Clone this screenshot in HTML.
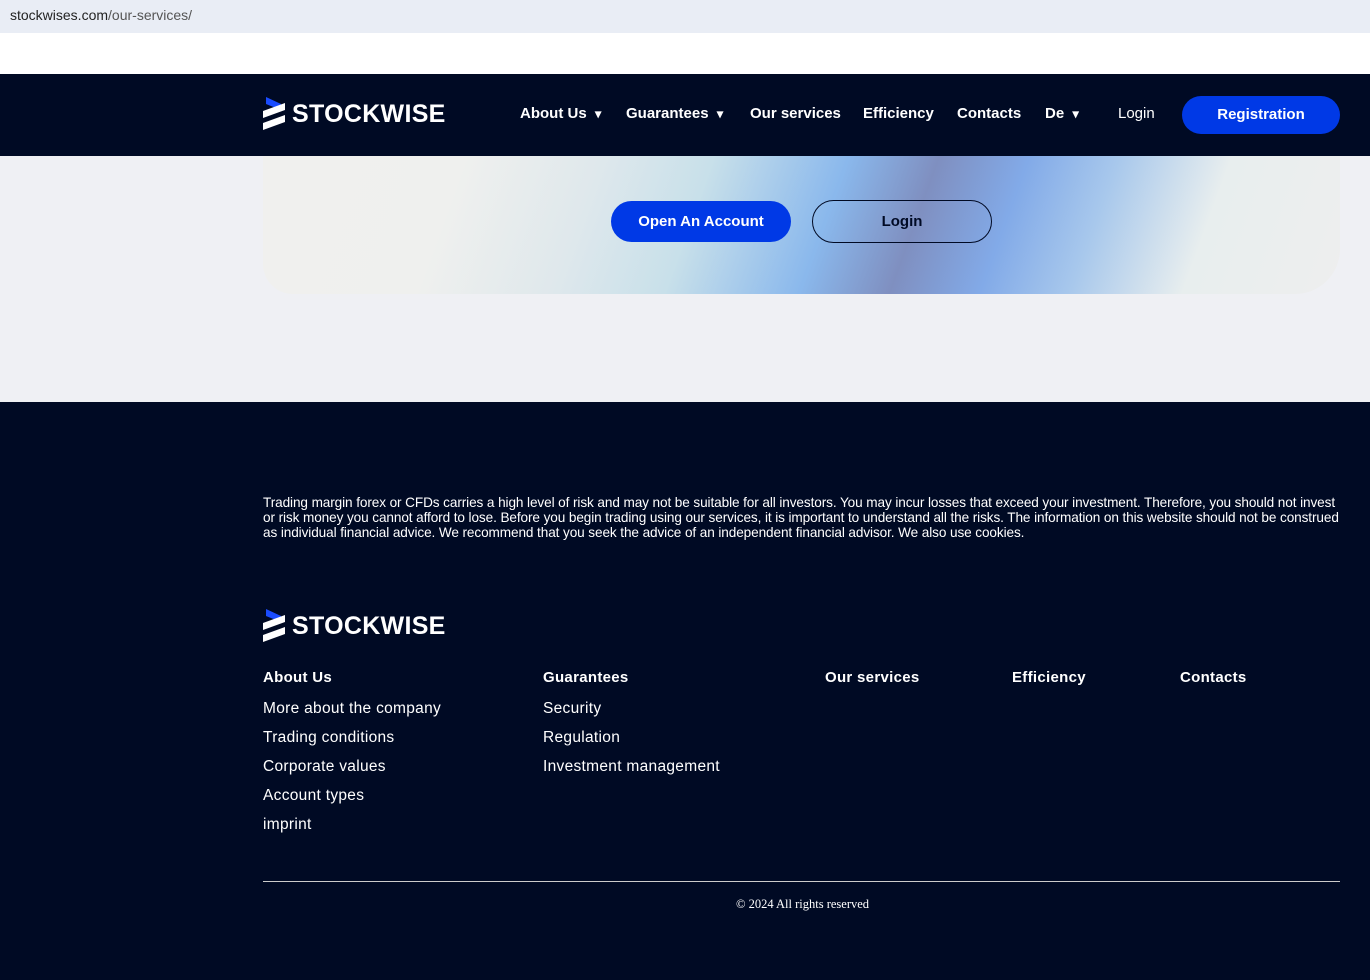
<!DOCTYPE html>
<html><head><meta charset="utf-8"><style>
*{margin:0;padding:0;box-sizing:border-box}
body{width:1370px;height:980px;overflow:hidden;font-family:"Liberation Sans",sans-serif;background:#eff0f4;position:relative}
.url{position:absolute;left:0;top:0;width:1370px;height:33px;background:#e9edf5;font-size:14px;color:#222;padding:7px 10px}
.url span{color:#555}
.white{position:absolute;top:33px;left:0;width:1370px;height:41px;background:#fff}
.nav{position:absolute;top:74px;left:0;width:1370px;height:82px;background:#000a24;color:#fff}
.logo{position:absolute;display:flex;align-items:center;gap:6px}
.logo b{font-size:25px;font-weight:800;color:#fff;letter-spacing:0.3px}
.nav a{position:absolute;top:31px;font-size:15px;font-weight:700;color:#fff}
.reg{position:absolute;left:1182px;top:22px;width:158px;height:38px;border-radius:19px;background:#0039e6;color:#fff;font-weight:700;font-size:15px;text-align:center;line-height:38px}
.banner{position:absolute;left:263px;top:156px;width:1077px;height:138px;border-radius:0 0 45px 30px;overflow:hidden;
background:linear-gradient(110deg,#f0f0ee 0%,#eff0ee 18%,#dfe8ec 30%,#c8e0ea 40%,#8ab8ec 52%,#7f8fc0 60%,#82aae8 68%,#a8c8ec 76%,#e8eeee 86%,#eeeeee 100%)}
.b1{position:absolute;left:611px;top:201px;width:180px;height:41px;border-radius:21px;background:#0039e6;color:#fff;font-weight:700;font-size:15px;text-align:center;line-height:41px}
.b2{position:absolute;left:812px;top:200px;width:180px;height:43px;border-radius:22px;border:1px solid #000a24;color:#000a24;font-weight:700;font-size:15px;text-align:center;line-height:41px}
.foot{position:absolute;top:402px;left:0;width:1370px;height:578px;background:#000a24;color:#fff}
.disc{position:absolute;left:263px;top:93px;width:1080px;font-size:13.6px;line-height:15px;letter-spacing:-0.1px}
.col{position:absolute;top:267px;font-size:15.5px;letter-spacing:0.3px}
.col h4{font-size:15px;font-weight:700;margin-bottom:14px}
.col div{margin-bottom:10px;height:19px}
.line{position:absolute;left:263px;top:479px;width:1077px;height:1px;background:#ccc}
.copy{position:absolute;top:495px;left:0;width:1605px;text-align:center;font-family:"Liberation Serif",serif;font-size:12.5px}
</style></head><body>
<div class="url">stockwises.com<span>/our-services/</span></div>
<div class="white"></div>
<div class="nav">
 <div class="logo" style="left:263px;top:23px">
  <svg width="23" height="34" viewBox="0 0 23 34"><polygon points="0,0 15,7 15,13 0,7" fill="#1a4cff" transform="translate(3,0)"/><polygon points="0,14 22,6 22,13 0,21" fill="#fff"/><polygon points="0,26 22,18 22,25 0,33" fill="#fff"/></svg>
  <b>STOCKWISE</b></div>
 <a style="left:520px">About Us &nbsp;<small>▾</small></a>
 <a style="left:626px">Guarantees &nbsp;<small>▾</small></a>
 <a style="left:750px">Our services</a>
 <a style="left:863px">Efficiency</a>
 <a style="left:957px">Contacts</a>
 <a style="left:1045px">De &nbsp;<small>▾</small></a>
 <a style="left:1118px;font-weight:400">Login</a>
 <div class="reg">Registration</div>
</div>
<div class="banner"></div>
<div class="b1">Open An Account</div>
<div class="b2">Login</div>
<div class="foot">
 <div class="disc">Trading margin forex or CFDs carries a high level of risk and may not be suitable for all investors. You may incur losses that exceed your investment. Therefore, you should not invest or risk money you cannot afford to lose. Before you begin trading using our services, it is important to understand all the risks. The information on this website should not be construed as individual financial advice. We recommend that you seek the advice of an independent financial advisor. We also use cookies.</div>
 <div class="logo" style="left:263px;top:207px">
  <svg width="23" height="34" viewBox="0 0 23 34"><polygon points="0,0 15,7 15,13 0,7" fill="#1a4cff" transform="translate(3,0)"/><polygon points="0,14 22,6 22,13 0,21" fill="#fff"/><polygon points="0,26 22,18 22,25 0,33" fill="#fff"/></svg>
  <b>STOCKWISE</b></div>
 <div class="col" style="left:263px"><h4>About Us</h4><div>More about the company</div><div>Trading conditions</div><div>Corporate values</div><div>Account types</div><div>imprint</div></div>
 <div class="col" style="left:543px"><h4>Guarantees</h4><div>Security</div><div>Regulation</div><div>Investment management</div></div>
 <div class="col" style="left:825px"><h4>Our services</h4></div>
 <div class="col" style="left:1012px"><h4>Efficiency</h4></div>
 <div class="col" style="left:1180px"><h4>Contacts</h4></div>
 <div class="line"></div>
 <div class="copy">© 2024 All rights reserved</div>
</div>
</body></html>
